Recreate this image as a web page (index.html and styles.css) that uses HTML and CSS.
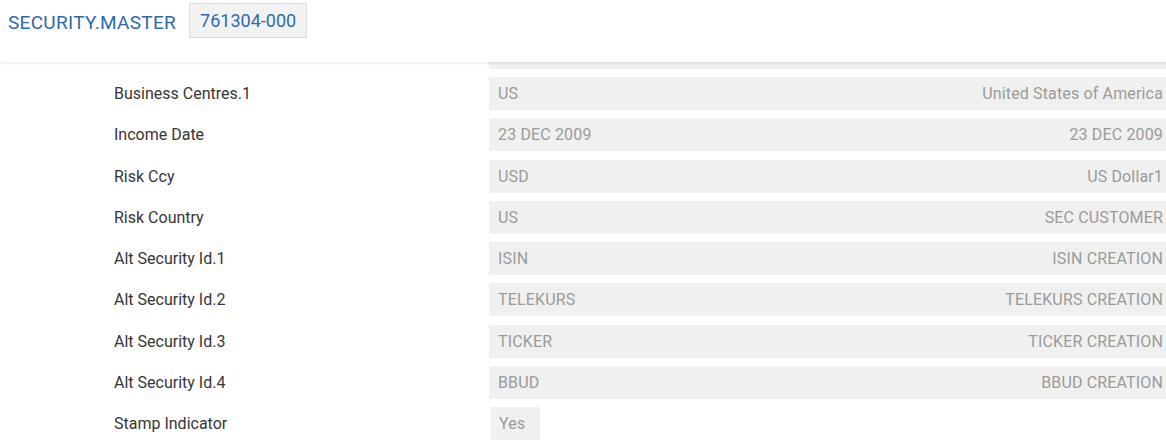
FILE: index.html
```html
<!DOCTYPE html>
<html>
<head>
<meta charset="utf-8">
<link rel="stylesheet" href="styles.css">
</head>
<body>
<header class="topbar">
  <span class="app-title">SECURITY.MASTER</span>
  <span class="record-id">761304-000</span>
</header>
<main class="details">
  <div class="row row-cut"><span class="label"></span><div class="field"></div></div>
  <div class="row"><span class="label">Business Centres.1</span><div class="field"><span>US</span><span>United States of America</span></div></div>
  <div class="row"><span class="label">Income Date</span><div class="field"><span>23 DEC 2009</span><span>23 DEC 2009</span></div></div>
  <div class="row"><span class="label">Risk Ccy</span><div class="field"><span>USD</span><span>US Dollar1</span></div></div>
  <div class="row"><span class="label">Risk Country</span><div class="field"><span>US</span><span>SEC CUSTOMER</span></div></div>
  <div class="row"><span class="label">Alt Security Id.1</span><div class="field"><span>ISIN</span><span>ISIN CREATION</span></div></div>
  <div class="row"><span class="label">Alt Security Id.2</span><div class="field"><span>TELEKURS</span><span>TELEKURS CREATION</span></div></div>
  <div class="row"><span class="label">Alt Security Id.3</span><div class="field"><span>TICKER</span><span>TICKER CREATION</span></div></div>
  <div class="row"><span class="label">Alt Security Id.4</span><div class="field"><span>BBUD</span><span>BBUD CREATION</span></div></div>
  <div class="row"><span class="label">Stamp Indicator</span><div class="field field-small"><span>Yes</span></div></div>
</main>
</body>
</html>
```

FILE: styles.css
```css
html, body {
  margin: 0;
  padding: 0;
  background: #ffffff;
  font-family: Roboto, "Liberation Sans", sans-serif;
  overflow: hidden;
}

.topbar {
  position: relative;
  z-index: 2;
  height: 62px;
  box-sizing: border-box;
  padding: 3px 0 0 8px;
  display: flex;
  align-items: flex-start;
  gap: 13px;
  background: #ffffff;
  box-shadow: 0 1px 3px rgba(0, 0, 0, 0.12);
}

.app-title {
  margin-top: 8px;
  font-size: 19px;
  color: #2f6ba6;
  letter-spacing: 0.3px;
}

.record-id {
  height: 35px;
  box-sizing: border-box;
  padding: 0 10px;
  display: flex;
  align-items: center;
  background: #f2f2f2;
  border: 1px solid #dcdcdc;
  font-size: 18px;
  color: #2f6ba6;
}

.details {
  display: flex;
  flex-direction: column;
  gap: 8.25px;
  padding-left: 114px;
}

.row {
  display: flex;
  align-items: center;
  height: 33px;
}

.row-cut {
  height: 6.75px;
}

.label {
  width: 375px;
  flex: none;
  font-size: 16px;
  color: #363636;
}

.field {
  width: 677px;
  height: 100%;
  box-sizing: border-box;
  padding: 0 3px 0 9px;
  display: flex;
  align-items: center;
  justify-content: space-between;
  background: #f0f0f0;
  font-size: 16px;
  color: #9b9b9b;
  letter-spacing: 0.15px;
}

.field-small {
  width: 49px;
  margin-left: 2px;
  padding: 0 0 0 8px;
}
```
